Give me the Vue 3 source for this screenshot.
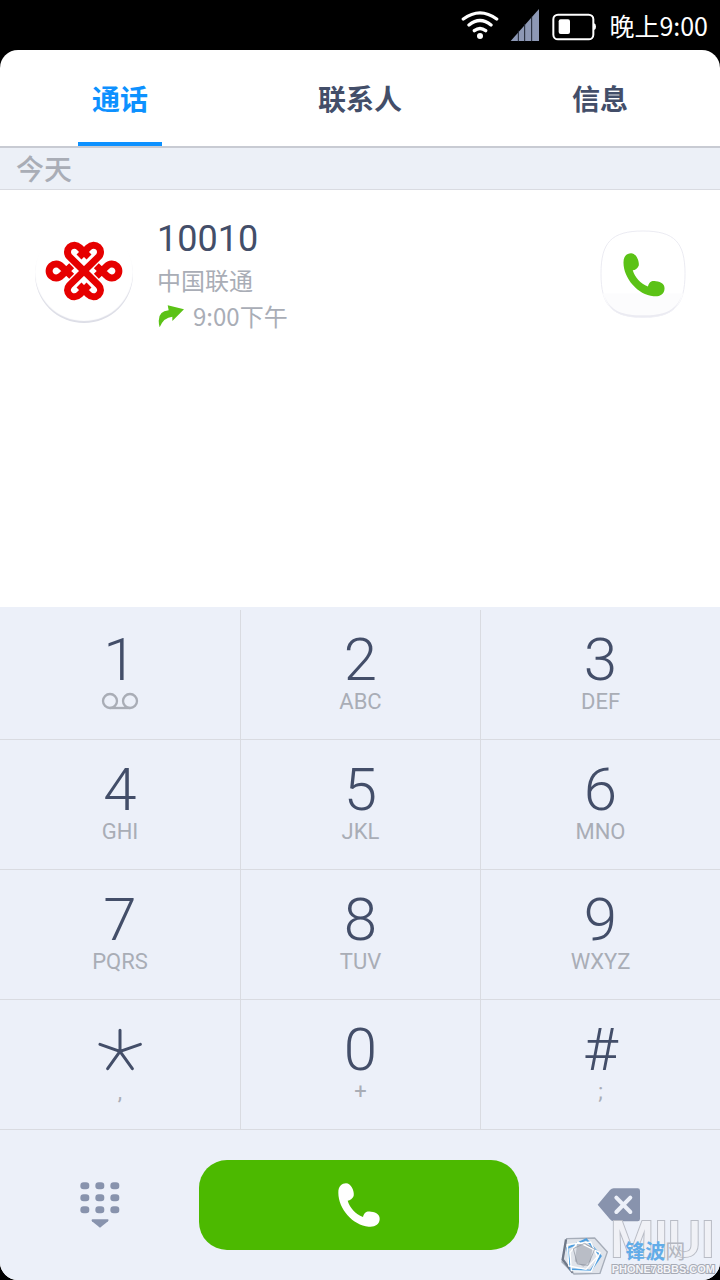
<script setup>
import { ref } from 'vue'

const tabs = ['通话', '联系人', '信息']
const active = ref(0)
const keys = [
  { digit: '1', sub: '' },
  { digit: '2', sub: 'ABC' },
  { digit: '3', sub: 'DEF' },
  { digit: '4', sub: 'GHI' },
  { digit: '5', sub: 'JKL' },
  { digit: '6', sub: 'MNO' },
  { digit: '7', sub: 'PQRS' },
  { digit: '8', sub: 'TUV' },
  { digit: '9', sub: 'WXYZ' },
  { digit: '*', sub: ',' },
  { digit: '0', sub: '+' },
  { digit: '#', sub: ';' }
]
</script>

<template>
  <div class="phone">
    <header class="status">
      <svg width="38" height="32" viewBox="63 24 114 96" fill="none" stroke="#fff" stroke-width="10" stroke-linecap="round">
        <path d="M70 54Q120 17 170 54M87 72Q120 45 153 72M103 89Q120 76 137 89" />
        <circle cx="120" cy="105" r="9" fill="#fff" stroke="none" />
      </svg>
      <svg class="signal" width="30" height="34" viewBox="210 22 90 102">
        <path d="M212 121L297 25V121Z" fill="#8d98b5" />
        <path d="M235 90V122M254 70V122M275 48V122" stroke="#1c2230" stroke-width="3" />
      </svg>
      <svg class="battery" width="44" height="28" viewBox="336 39 132 84">
        <rect x="340" y="44" width="120" height="74" rx="14" fill="none" stroke="#fff" stroke-width="6" />
        <rect x="356" y="58" width="34" height="44" rx="6" fill="#fff" />
        <path d="M462 70q6 1 6 10t-6 10z" fill="#fff" />
      </svg>
      <time class="clock">晚上9:00</time>
    </header>

    <main class="screen">
      <nav class="tabs">
        <button v-for="(t, i) in tabs" :key="t" class="tab" :class="{ on: i === active }" @click="active = i">
          <span>{{ t }}</span>
        </button>
      </nav>
      <h2 class="day">今天</h2>

      <section class="log">
        <article class="entry">
          <div class="avatar">
            <svg width="80" height="62" viewBox="73 91 240 186" fill="none" stroke="#e60000" stroke-width="21">
              <path d="M193 184L149 141A20 20 0 1 1 179 113L208 142M193 184L237 141A20 20 0 1 0 207 113L178 142" />
              <path d="M193 184L149 227A20 20 0 1 0 179 255L208 226M193 184L237 227A20 20 0 1 1 207 255L178 226" />
              <path d="M156 168L125 198A21 21 0 1 1 125 170L156 200M230 168L261 198A21 21 0 1 0 261 170L230 200" />
            </svg>
          </div>
          <div class="info">
            <strong class="number">10010</strong>
            <span class="carrier">中国联通</span>
            <span class="when">
              <svg width="27" height="22" viewBox="412 289 81 66">
                <path d="M444 290L493 302L458 337V324Q432 326 420 356Q408 308 447 305Z" fill="#5bc216" />
              </svg>
              9:00下午
            </span>
          </div>
          <button class="dial" aria-label="拨打">
            <svg width="86" height="88" viewBox="60 58 258 266">
              <path d="M189 61C285 61 316 96 316 190S285 322 189 322S62 284 62 190S93 61 189 61Z" fill="#fff" stroke="#ebebf2" stroke-width="3" />
              <path d="M67 250H311C296 302 260 322 189 322S82 302 67 250Z" fill="#fcfcfd" />
              <path d="M72 255C87 304 120 322 189 322S291 304 306 255C288 304 250 316 189 316S90 304 72 255Z" fill="#ebebf2" />
              <path d="M130 156C130 136 141 128 153 128C168 128 179 152 176 166C173 174 165 179 158 180C165 202 181 220 204 229C208 214 215 211 228 213C246 215 255 223 254 236C253 252 239 260 221 258C174 254 130 204 130 156Z" fill="#5bc216" />
            </svg>
          </button>
        </article>
      </section>

      <section class="pad">
        <button v-for="k in keys" :key="k.digit" class="key">
          <svg v-if="k.digit === '*'" width="44" height="60" viewBox="112 450 132 180" fill="none" stroke="#434e69" stroke-width="9" stroke-linecap="round" aria-label="*">
            <path d="M178 481V544M118 523L178 544L239 523M141 596L178 544L215 596" />
          </svg>
          <span v-else class="digit">{{ k.digit }}</span>
          <svg v-if="k.digit === '1'" class="voice" width="38" height="18" viewBox="126 246 114 54" fill="none" stroke="#a9adb6" stroke-width="7" aria-label="语音信箱">
            <circle cx="153" cy="273" r="21" />
            <circle cx="213" cy="273" r="21" />
            <path d="M153 294H213" />
          </svg>
          <span v-else class="sub">{{ k.sub }}</span>
        </button>
      </section>

      <footer class="actions">
        <button class="side" aria-label="收起键盘">
          <svg width="40" height="46" viewBox="239 128 120 138" fill="#8893ad">
            <g v-for="y in [129, 165, 201]" :key="y">
              <rect v-for="x in [240, 285, 330]" :key="x" :x="x" :y="y" width="27" height="21" rx="10" />
            </g>
            <path d="M276 240H323Q327 242 323 246L299 265L275 246Q271 242 276 240Z" />
          </svg>
        </button>
        <button class="call" aria-label="呼叫">
          <svg width="46" height="46" viewBox="125 124 134 138">
            <path d="M130 156C130 136 141 128 153 128C168 128 179 152 176 166C173 174 165 179 158 180C165 202 181 220 204 229C208 214 215 211 228 213C246 215 255 223 254 236C253 252 239 260 221 258C174 254 130 204 130 156Z" fill="#fff" />
          </svg>
        </button>
        <button class="side" aria-label="删除">
          <svg width="44" height="34" viewBox="168 53 132 102">
            <path d="M170 103L207 59Q212 54 218 54H290Q297 54 297 61V146Q297 153 290 153H218Q212 153 207 147Z" fill="#8893ad" />
            <path d="M226 82L268 125M268 82L226 125" stroke="#ecf0f9" stroke-width="12" stroke-linecap="round" />
          </svg>
        </button>
      </footer>

      <div class="mark">
        <svg width="50" height="40" viewBox="66 200 150 120" fill="none">
          <path d="M86 208L170 206L208 248L186 312L108 314L72 278Z" fill="#dfe3ea" stroke="#a6adb9" stroke-width="4" />
          <path d="M84 210L74 270L104 310" stroke="#6f7888" stroke-width="7" />
          <path d="M118 222L164 230L158 276L136 292L110 276Z" fill="#b9bdc6" />
          <path d="M145 210L188 260L158 304L98 300L88 236Z" stroke="#4f9fe0" stroke-width="6" />
          <path d="M88 226L158 218L178 262L144 300L92 290ZM120 218L186 250L160 306L100 304L96 250Z" stroke="#fff" stroke-width="4" />
          <path d="M106 238L140 222L170 240L150 288L118 284Z" stroke="#8a909c" stroke-width="2" />
        </svg>
        <div class="words">
          <span class="miui">MIUI</span>
          <span class="site"><b>锋波</b>网</span>
          <span class="url">PHONE78BBS.COM</span>
        </div>
      </div>
    </main>
  </div>
</template>

<style>
body {
  background: #000;
}
</style>

<style scoped>
.phone {
  min-height: 100vh;
  display: flex;
  flex-direction: column;
  background: #000;
  color: #434e69;
  font-family: "Noto Sans CJK SC", sans-serif;
}
button {
  border: 0;
  padding: 0;
  background: none;
  color: inherit;
  font: inherit;
}
svg {
  display: block;
  flex: none;
}
.status {
  height: 50px;
  display: flex;
  align-items: center;
  justify-content: flex-end;
  padding-right: 12px;
  color: #fff;
}
.signal {
  margin-left: 11px;
}
.battery {
  margin: 4px 13px 0 12px;
}
.clock {
  font-size: 25px;
  line-height: 50px;
}
.screen {
  position: relative;
  flex: 1;
  display: flex;
  flex-direction: column;
  background: #fff;
  border-radius: 18px;
  overflow: hidden;
}
.tabs {
  display: grid;
  grid-template-columns: repeat(3, 1fr);
  height: 96px;
  border-bottom: 2px solid #c8cbd3;
}
.tab {
  display: flex;
  justify-content: center;
  font-size: 28px;
  font-weight: 700;
  line-height: 96px;
}
.tab span {
  box-sizing: border-box;
  height: 96px;
  padding: 0 14px;
}
.tab.on span {
  color: #0d91ff;
  border-bottom: 4px solid #0d91ff;
}
.day {
  margin: 0;
  padding-left: 16px;
  font-size: 28px;
  font-weight: 500;
  line-height: 41px;
  color: #a9adb6;
  background: #ecf0f7;
  border-bottom: 1px solid #d9dbe1;
}
.log {
  flex: 1;
}
.entry {
  display: flex;
  align-items: flex-start;
  padding: 30px 34px 0 35px;
}
.avatar {
  box-sizing: border-box;
  width: 98px;
  height: 98px;
  margin-top: 5px;
  display: flex;
  justify-content: center;
  padding-top: 15px;
  border-radius: 50%;
  box-shadow: inset 0 -2px 1px #dcdde6;
}
.info {
  flex: 1;
  display: flex;
  flex-direction: column;
  padding-left: 24px;
}
.number {
  font-family: Roboto, sans-serif;
  font-size: 36px;
  font-weight: 400;
  line-height: 38px;
}
.carrier,
.when {
  font-size: 24px;
  line-height: 36px;
  color: #a9adb6;
}
.carrier {
  margin-top: 4px;
}
.when {
  display: flex;
  align-items: center;
  gap: 9px;
}
.dial {
  margin-top: 10px;
}
.pad {
  display: grid;
  grid-template-columns: repeat(3, 1fr);
  padding-top: 3px;
  background: #ecf0f9;
}
.key {
  box-sizing: border-box;
  height: 130px;
  display: flex;
  flex-direction: column;
  align-items: center;
  padding-top: 20px;
  border-left: 1px solid #d9dbe1;
  border-bottom: 1px solid #d9dbe1;
  font-family: Roboto, sans-serif;
}
.key:nth-child(3n + 1) {
  border-left: 0;
}
.digit {
  font-size: 60px;
  font-weight: 300;
  line-height: 60px;
}
.sub {
  font-size: 22px;
  line-height: 24px;
  color: #a9adb6;
}
.voice {
  margin-top: 2px;
}
.actions {
  height: 150px;
  display: grid;
  grid-template-columns: 199px 1fr 199px;
  padding-right: 2px;
  align-items: center;
  background: #ecf0f9;
}
.side {
  display: flex;
  justify-content: center;
}
.call {
  height: 90px;
  display: flex;
  align-items: center;
  justify-content: center;
  border-radius: 28px;
  background: #4cb900;
}
.mark {
  position: absolute;
  right: 5px;
  bottom: 4px;
  display: flex;
  align-items: flex-end;
  pointer-events: none;
}
.words {
  position: relative;
  display: flex;
  flex-direction: column;
  align-items: flex-end;
}
.miui {
  font-family: Roboto, sans-serif;
  font-size: 50px;
  font-weight: 500;
  line-height: 46px;
  color: #f0f1f6;
  -webkit-text-stroke: 2px #b9bcc5;
  paint-order: stroke;
}
.site {
  position: absolute;
  left: 15px;
  top: 23px;
  font-size: 20px;
  line-height: 22px;
  color: #b4b7c0;
}
.site b {
  color: #62ace8;
}
.url {
  font-family: "Liberation Sans", sans-serif;
  font-size: 11px;
  font-weight: 700;
  line-height: 13px;
  color: #f4f5f9;
  -webkit-text-stroke: 2px #a6aab5;
  paint-order: stroke;
}
</style>
